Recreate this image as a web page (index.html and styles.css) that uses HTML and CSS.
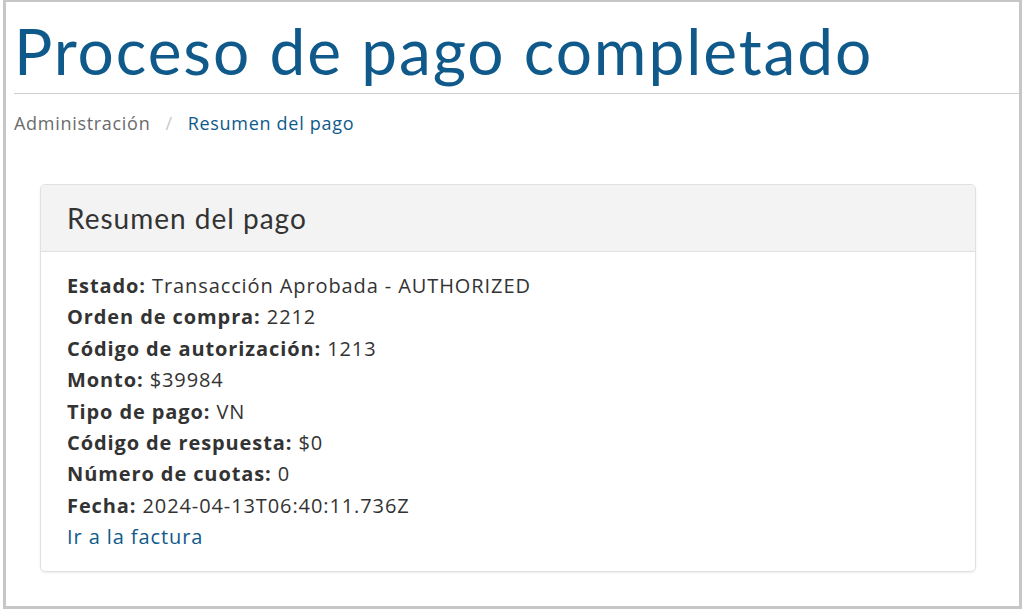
FILE: index.html
```html
<!DOCTYPE html>
<html lang="es">
<head>
    <meta charset="UTF-8">
    <meta name="viewport" content="width=device-width, initial-scale=1.0">
    <title>Resumen del pago</title>
    <link rel="stylesheet" href="styles.css">
</head>
<body>
    <div class="frame">
        <h1 class="page-title">Proceso de pago completado</h1>
        <hr class="title-rule">
        <nav class="crumbs">
            <span class="crumb">Administración</span>
            <span class="crumb-sep">/</span>
            <a class="crumb crumb-active" href="#">Resumen del pago</a>
        </nav>

        <div class="card">
            <div class="card-head">Resumen del pago</div>
            <div class="card-body">
                <p><b>Estado:</b> Transacción Aprobada - AUTHORIZED</p>
                <p><b>Orden de compra:</b> 2212</p>
                <p><b>Código de autorización:</b> 1213</p>
                <p><b>Monto:</b> $39984</p>
                <p><b>Tipo de pago:</b> VN</p>
                <p><b>Código de respuesta:</b> $0</p>
                <p><b>Número de cuotas:</b> 0</p>
                <p><b>Fecha:</b> 2024-04-13T06:40:11.736Z</p>
                <a class="invoice-link" href="#">Ir a la factura</a>
            </div>
        </div>
    </div>
</body>
</html>
```

FILE: styles.css
```css
body{
    margin: 0;
    background-color: #fff;
    font-family: "Open Sans", "Liberation Sans", sans-serif;
    color: #333;
}
.frame{
    margin: 0 2px 0 3px;
    height: 604px;
    border: 3px solid #c6c6c6;
    border-top-width: 2px;
    padding: 0 0 0 8px;
    overflow: hidden;
}
.page-title{
    margin: 11px 0 0 0;
    font-family: Lato, "Open Sans", sans-serif;
    font-weight: 400;
    font-size: 64px;
    line-height: 76px;
    letter-spacing: 1.9px;
    color: #0f5a8b;
}
.title-rule{
    margin: 4px 0 0 0;
    border: 0;
    border-top: 1px solid #cfcfcf;
}
.crumbs{
    display: flex;
    align-items: center;
    gap: 14px;
    margin: 17px 0 0 0;
    font-size: 18px;
    line-height: 24px;
    letter-spacing: 0.7px;
}
.crumb{
    color: #6b6b6b;
    text-decoration: none;
}
.crumb-sep{
    color: #c9c9c9;
    padding: 0 1px;
}
.crumb-active{
    color: #0f5a8b;
}
.card{
    margin: 49px 43px 0 26px;
    border: 1px solid #e0e0e0;
    border-radius: 5px;
    box-shadow: 0 1px 2px rgba(0,0,0,0.08);
}
.card-head{
    height: 66px;
    padding: 0 26px;
    display: flex;
    align-items: center;
    background-color: #f3f3f3;
    border-bottom: 1px solid #e0e0e0;
    border-radius: 5px 5px 0 0;
    font-family: Lato, "Open Sans", sans-serif;
    font-size: 28px;
    letter-spacing: 1px;
    color: #333;
}
.card-body{
    padding: 18px 26px 18px 26px;
    font-size: 20px;
    line-height: 31.4px;
    letter-spacing: 0.9px;
}
.card-body p{
    margin: 0;
}
.card-body b{
    font-weight: 700;
}
.invoice-link{
    color: #0f5a8b;
    text-decoration: none;
}
```
